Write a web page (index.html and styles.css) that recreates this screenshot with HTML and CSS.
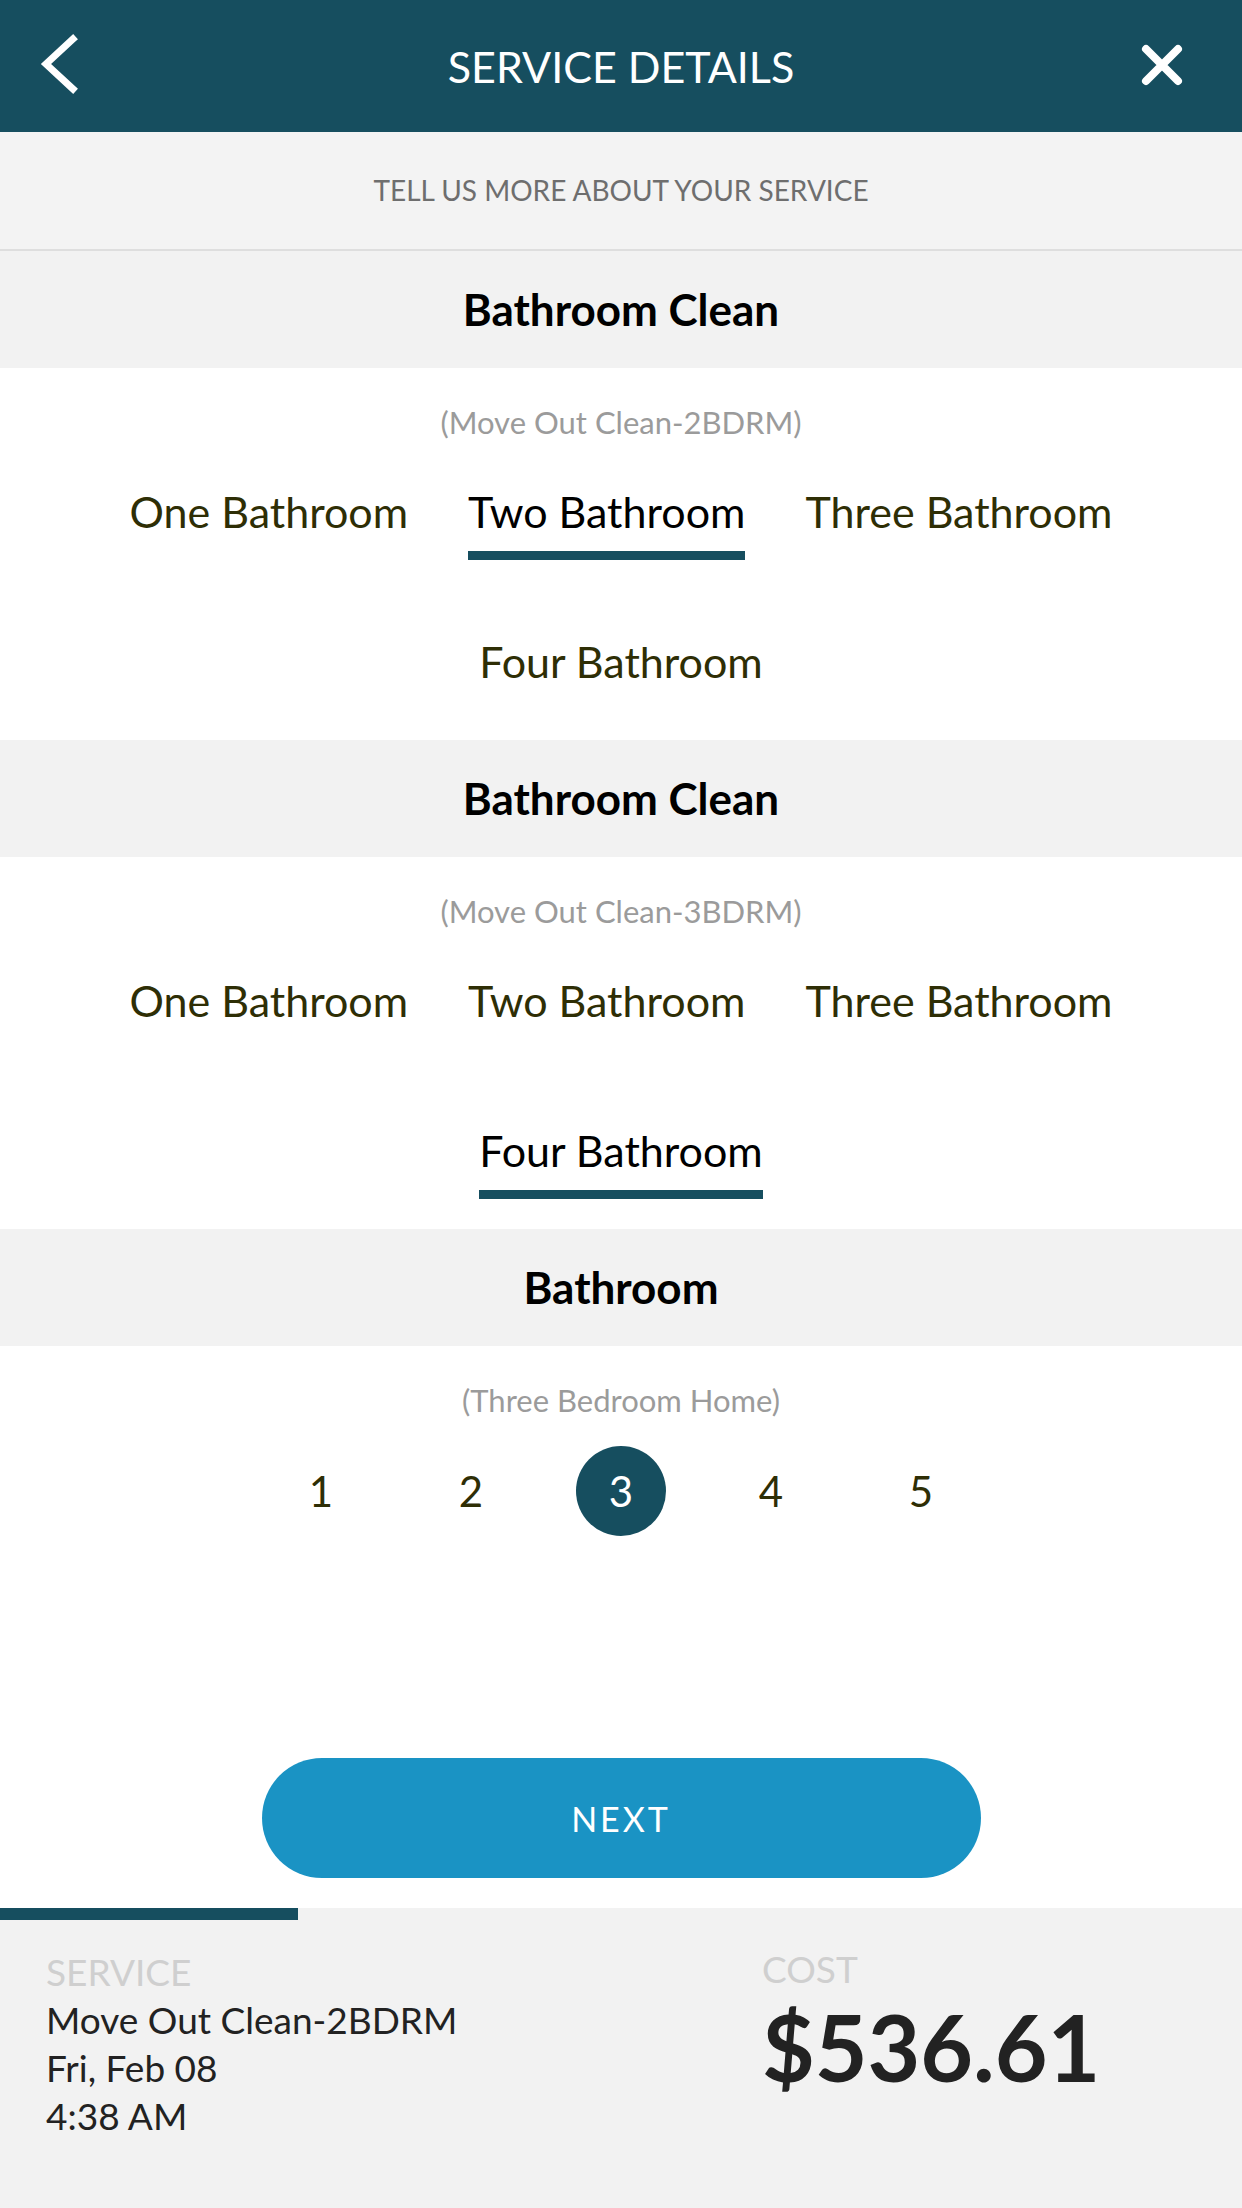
FILE: index.html
```html
<!DOCTYPE html>
<html lang="en">
<head>
    <meta charset="UTF-8">
    <meta name="viewport" content="width=device-width, initial-scale=1.0">
    <title>Service Details</title>
    <link rel="stylesheet" href="styles.css">
</head>
<body>
    <div id="app">
        <header class="topbar">
            <a class="topbar-btn back" href="#">
                <svg width="40" height="64" viewBox="0 0 40 64">
                    <polyline points="35,5 8,30 35,55" fill="none" stroke="#fff" stroke-width="7" stroke-linecap="square" />
                </svg>
            </a>
            <h1 class="title">SERVICE DETAILS</h1>
            <a class="topbar-btn close" href="#">
                <svg width="44" height="44" viewBox="0 0 44 44">
                    <path d="M6 6 L38 38 M38 6 L6 38" stroke="#fff" stroke-width="8" stroke-linecap="round" />
                </svg>
            </a>
        </header>

        <div class="intro">TELL US MORE ABOUT YOUR SERVICE</div>

        <main class="content">
            <section class="question">
                <h2 class="question-title">Bathroom Clean</h2>
                <div class="question-body">
                    <p class="question-note">(Move Out Clean-2BDRM)</p>
                    <div class="options">
                        <span class="option">One Bathroom</span>
                        <span class="option selected">Two Bathroom</span>
                        <span class="option">Three Bathroom</span>
                        <span class="option">Four Bathroom</span>
                    </div>
                </div>
            </section>

            <section class="question">
                <h2 class="question-title">Bathroom Clean</h2>
                <div class="question-body">
                    <p class="question-note">(Move Out Clean-3BDRM)</p>
                    <div class="options">
                        <span class="option">One Bathroom</span>
                        <span class="option">Two Bathroom</span>
                        <span class="option">Three Bathroom</span>
                        <span class="option selected">Four Bathroom</span>
                    </div>
                </div>
            </section>

            <section class="question">
                <h2 class="question-title">Bathroom</h2>
                <div class="question-body">
                    <p class="question-note">(Three Bedroom Home)</p>
                    <div class="counter">
                        <span class="count">1</span>
                        <span class="count">2</span>
                        <span class="count active">3</span>
                        <span class="count">4</span>
                        <span class="count">5</span>
                    </div>
                </div>
            </section>
        </main>

        <div class="actions">
            <button class="next-btn">NEXT</button>
        </div>

        <footer class="summary">
            <div class="progress"><div class="progress-fill" style="width: 24%"></div></div>
            <div class="summary-info">
                <div class="summary-col">
                    <div class="summary-label">SERVICE</div>
                    <div class="summary-line">Move Out Clean-2BDRM</div>
                    <div class="summary-line">Fri, Feb 08</div>
                    <div class="summary-line">4:38 AM</div>
                </div>
                <div class="summary-col cost-col">
                    <div class="summary-label">COST</div>
                    <div class="summary-cost">$536.61</div>
                </div>
            </div>
        </footer>
    </div>
</body>
</html>
```

FILE: styles.css
```css
body {
    margin: 0;
    font-family: Lato, "Open Sans", sans-serif;
    background: #fff;
}

#app {
    display: flex;
    flex-direction: column;
    min-height: 100vh;
}

/* top bar */
.topbar {
    height: 132px;
    background-color: #164e5f;
    display: grid;
    grid-template-columns: 1fr auto 1fr;
    align-items: center;
    padding: 0 38px;
}

.topbar-btn {
    display: flex;
    align-items: center;
}

.topbar-btn.close {
    justify-content: flex-end;
    margin-right: 20px;
    margin-bottom: 3px;
}

.title {
    margin: 0;
    color: #fff;
    font-size: 43px;
    font-weight: 400;
}

.intro {
    height: 117px;
    line-height: 117px;
    text-align: center;
    background: #f3f3f3;
    border-bottom: 2px solid #dedede;
    color: #6e6e6e;
    font-size: 28px;
}

/* questions */
.content {
    flex: 1;
}

.question-title {
    margin: 0;
    height: 117px;
    line-height: 117px;
    text-align: center;
    background: #f2f2f2;
    color: #000;
    font-size: 44px;
    font-weight: 700;
}

.question-body {
    padding: 36px 40px 30px;
    text-align: center;
}

.question-note {
    margin: 0;
    line-height: 36px;
    font-size: 31px;
    color: #9b9b9b;
}

.options {
    display: flex;
    flex-wrap: wrap;
    justify-content: center;
    column-gap: 60px;
    row-gap: 77px;
    margin-top: 47px;
}

.option {
    font-size: 43px;
    line-height: 50px;
    color: #2e2e05;
    padding-bottom: 14px;
    border-bottom: 9px solid transparent;
}

.option.selected {
    color: #000;
    border-bottom-color: #164e5f;
}

.counter {
    display: flex;
    justify-content: center;
    gap: 60px;
    margin-top: 28px;
}

.count {
    width: 90px;
    height: 90px;
    border-radius: 50%;
    display: flex;
    align-items: center;
    justify-content: center;
    font-size: 42px;
    color: #2e2e05;
}

.count.active {
    background: #164e5f;
    color: #fff;
}

/* next button */
.actions {
    display: flex;
    justify-content: center;
    padding-bottom: 30px;
}

.next-btn {
    width: 719px;
    height: 120px;
    border: none;
    border-radius: 60px;
    background-color: #1a93c4;
    color: #fff;
    font-family: Lato, sans-serif;
    font-size: 34px;
    letter-spacing: 3px;
    cursor: pointer;
}

/* footer summary */
.summary {
    height: 300px;
    background: #f2f2f2;
}

.progress {
    height: 12px;
}

.progress-fill {
    height: 100%;
    background: #164e5f;
}

.summary-info {
    display: grid;
    grid-template-columns: 716px 1fr;
    padding: 28px 46px 0;
}

.summary-label {
    font-size: 37px;
    line-height: 48px;
    color: #cfcfcf;
}

.summary-line {
    font-size: 37px;
    line-height: 48px;
    color: #222;
}

.cost-col {
    margin-top: -3px;
}

.summary-cost {
    margin-top: -1px;
    font-size: 91px;
    line-height: 110px;
    font-weight: 700;
    color: #222;
}
```
